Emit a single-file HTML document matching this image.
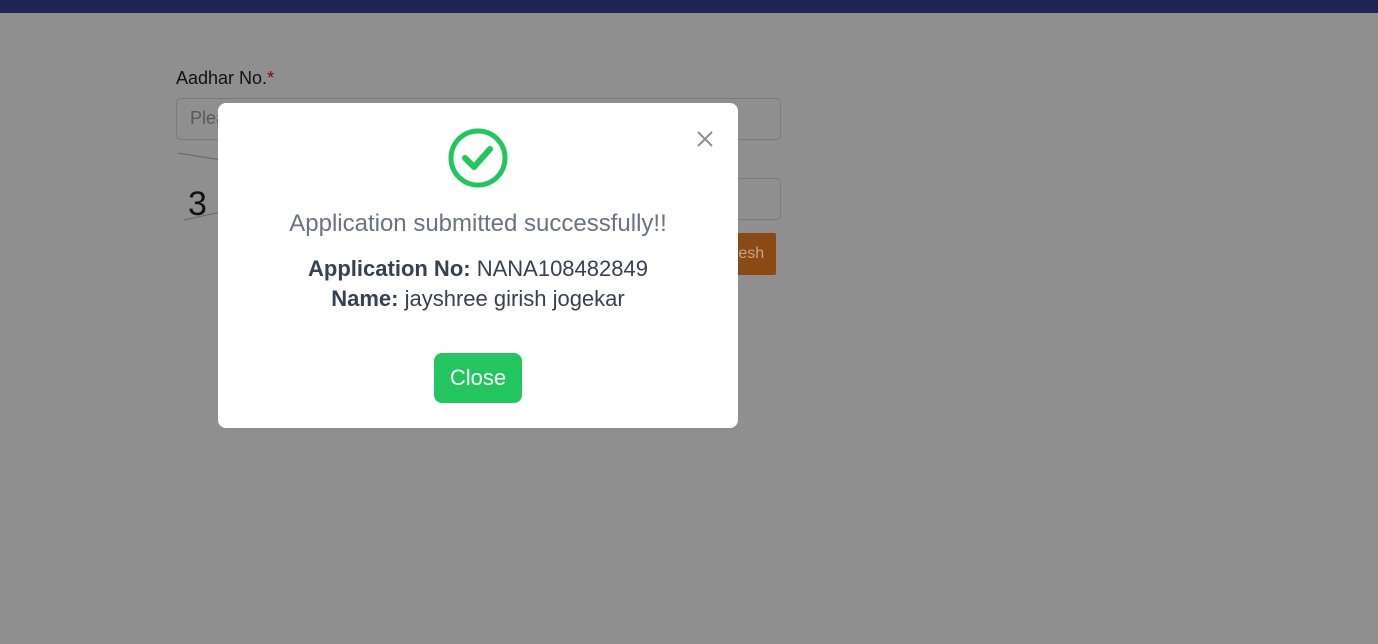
<!DOCTYPE html>
<html><head><style>
body{margin:0;width:1378px;height:644px;background:#8f8f8f;position:relative;overflow:hidden;font-family:"Liberation Sans Narrow","Liberation Sans",sans-serif}
.nav{position:absolute;left:0;top:0;width:1378px;height:13px;background:#1f2550}
.lbl{position:absolute;left:176px;top:68px;font-size:18px;color:#111}
.lbl span{color:#8b0000}
.inp{position:absolute;border:1px solid #7a7a7a;border-radius:5px;background:#8f8f8f}
.ph{position:absolute;left:190px;top:108px;font-size:18px;color:#5a5a5a}
.btn{position:absolute;left:736px;top:233px;width:40px;height:42px;background:#8a4a16;border-radius:2px;color:#c9a585;font-size:16px;line-height:42px;text-indent:-3px}
.modal{position:absolute;left:218px;top:103px;width:520px;height:325px;background:#fff;border-radius:8px;text-align:center}
.t1{position:absolute;left:0;width:520px;top:107px;font-size:24px;color:#6b7280}
.t2{position:absolute;left:0;width:520px;top:151px;font-size:22px;color:#374151;line-height:30px}
.close{position:absolute;left:216px;top:250px;width:88px;height:50px;background:#22c55e;border-radius:8px;color:#fff;font-size:22px;line-height:50px}
</style></head><body>
<div class="nav"></div>
<div class="lbl">Aadhar No.<span>*</span></div>
<div class="inp" style="left:176px;top:98px;width:603px;height:40px"></div>
<div class="ph">Plea</div>
<div class="inp" style="left:700px;top:178px;width:79px;height:40px"></div>
<svg style="position:absolute;left:176px;top:150px" width="50" height="75"><line x1="2" y1="3" x2="45" y2="10" stroke="#666"/><line x1="8" y1="70" x2="45" y2="62" stroke="#666"/><text x="12" y="65" font-size="34" font-family="Liberation Sans" fill="#111">3</text></svg>
<div class="btn">resh</div>
<div class="modal">
<svg style="position:absolute;left:228px;top:24px" width="64" height="64" viewBox="0 0 64 64"><circle cx="32" cy="31" r="27" fill="none" stroke="#22c55e" stroke-width="5"/><path d="M19 31 L28 40 L44 22" fill="none" stroke="#22c55e" stroke-width="6" stroke-linecap="round" stroke-linejoin="round"/></svg>
<svg style="position:absolute;left:478px;top:27px" width="18" height="18"><path d="M2 2L16 16M16 2L2 16" stroke="#8a8f98" stroke-width="2"/></svg>
<div class="t1">Application submitted successfully!!</div>
<div class="t2"><b>Application No:</b> NANA108482849<br><b>Name:</b> jayshree girish jogekar</div>
<div class="close">Close</div>
</div>
</body></html>
